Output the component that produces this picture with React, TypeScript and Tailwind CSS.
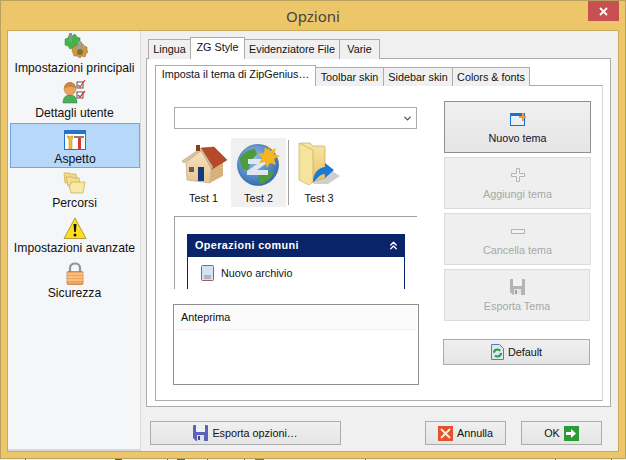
import React from 'react';
import { ChevronDown, ChevronsUp } from 'lucide-react';

const GearsIcon = () => (
  <svg width="30" height="27" viewBox="0 0 30 27">
    <path d="M5 6l3-1 1-3 3 1 3-2 2 3 3 1v3l2 2-2 3-3 1-1 2-3-1-3 1-2-3-3-1V9z" fill="#45b24a" stroke="#2c8a35" strokeWidth=".5" />
    <path d="M13 14l3-1 1-2 3 1 3-1 1 2 3 1v3l1 2-2 2-1 3-3-1-2 2-3-2-3 0-1-3-1-2z" fill="#c99a45" stroke="#8c6a28" strokeWidth=".5" />
    <circle cx="20" cy="19" r="3" fill="#8e6a2c" />
    <rect x="9" y="0" width="3" height="9" fill="#8a9296" />
    <rect x="18" y="8" width="3" height="8" fill="#9aa2a6" />
  </svg>
);

const UserCheckIcon = () => (
  <svg width="26" height="26" viewBox="0 0 26 26">
    <path d="M1 24c0-6 3-8 7-8s7 2 7 8z" fill="#4cae5b" stroke="#2c7d3b" strokeWidth=".5" />
    <circle cx="8" cy="10" r="6" fill="#e9a35f" stroke="#b87433" strokeWidth=".5" />
    <path d="M2 10c0-5 3-7 6-7s6 2 6 7c-3-3-9-3-12 0z" fill="#c98343" />
    <rect x="15" y="3" width="6" height="6" fill="#fff" stroke="#555" />
    <rect x="15" y="13" width="6" height="6" fill="#fff" stroke="#555" />
    <path d="M16 6l2 2 5-7M16 16l2 2 5-6" fill="none" stroke="#d8382c" strokeWidth="1.2" />
  </svg>
);

const AppearanceIcon = () => (
  <svg width="22" height="21" viewBox="0 0 22 21">
    <rect x=".5" y=".5" width="21" height="19" fill="#fff" stroke="#2a6fc9" />
    <rect x="1" y="1" width="20" height="3" fill="#2a6fc9" />
    <path d="M3 6l2 0 1 2 1-2 2 0-1 4v9H5v-9z" fill="#f0c030" stroke="#a67c10" strokeWidth=".5" />
    <path d="M10 6h10v2h-10z" fill="#7d8488" />
    <rect x="14" y="8" width="3" height="11" fill="#d9392b" />
  </svg>
);

const FoldersIcon = () => (
  <svg width="24" height="24" viewBox="0 0 24 24">
    <path d="M1 2h6l1 1h5l1 9H2z" fill="#f0da8c" stroke="#c9a94a" strokeWidth=".7" />
    <path d="M3 6h6l1 1h6l1 8H5z" fill="#f3de92" stroke="#c9a94a" strokeWidth=".7" />
    <path d="M8 11h14l-2 11H8l-2-8 2-1z" fill="#f8e9a4" stroke="#c9a94a" strokeWidth=".7" />
  </svg>
);

const WarningIcon = () => (
  <svg width="24" height="23" viewBox="0 0 24 23">
    <path d="M12 1L23 21.500H1z" fill="#ffdc1e" stroke="#9c8a30" strokeWidth=".8" strokeLinejoin="round" />
    <path d="M10.500 7h3l-.7 8h-1.600z" fill="#111" />
    <circle cx="12" cy="18" r="1.500" fill="#111" />
  </svg>
);

const LockIcon = () => (
  <svg width="18" height="23" viewBox="0 0 18 23">
    <path d="M4 10V6c0-6 10-6 10 0v4" fill="none" stroke="#8b97a3" strokeWidth="2.200" />
    <rect x="1" y="9.500" width="16" height="13" rx="1" fill="#f0a45c" stroke="#bd7430" strokeWidth=".7" />
    <path d="M1 12h16M1 15h16M1 18h16" stroke="#fbd9a4" strokeWidth="1" />
  </svg>
);

const HouseIcon = () => (
  <svg width="46" height="42" viewBox="0 0 46 42">
    <defs>
      <linearGradient id="houseFront" x1="0" y1="0" x2="0" y2="1">
        <stop offset="0" stopColor="#f8e3c0" />
        <stop offset="1" stopColor="#e6c595" />
      </linearGradient>
    </defs>
    <path d="M30 24l12-6v14l-13 7z" fill="#dcb781" />
    <path d="M30 27l12-6M30 30l12-6M30 33l12-6M30 36l12-6" stroke="#c49c62" strokeWidth=".6" />
    <path d="M20 5L5 19l1 17 23 3 1-15z" fill="url(#houseFront)" stroke="#b09468" strokeWidth=".5" />
    <path d="M20 4l13-1 13 13-15 9z" fill="#b5492a" stroke="#84331a" strokeWidth=".5" />
    <path d="M20 4L1 17l2 2L20 7l11 18 1-2z" fill="#d9c3a0" stroke="#9a8660" strokeWidth=".4" />
    <rect x="15" y="1" width="4" height="6" fill="#8e3a1c" />
    <rect x="8" y="23" width="5" height="5" fill="#5b6160" />
    <rect x="17" y="23" width="6" height="14" fill="#123a78" />
  </svg>
);

const GlobeIcon = () => (
  <svg width="44" height="42" viewBox="0 0 44 42">
    <defs>
      <radialGradient id="globeSea" cx=".4" cy=".35" r=".75">
        <stop offset="0" stopColor="#8fc0ea" />
        <stop offset="1" stopColor="#2a62a8" />
      </radialGradient>
    </defs>
    <circle cx="21" cy="21" r="20.500" fill="url(#globeSea)" stroke="#2b5e96" strokeWidth=".6" />
    <path d="M3 14c4-6 10-9 15-9l2 5-6 7-3 9-5-1c-2-3-3-7-3-11z" fill="#4f9a3b" />
    <path d="M21 31l9-4 7 1c-3 7-8 11-14 12z" fill="#4f9a3b" />
    <path d="M11 15h19v4L20 26h11v5H10v-4l10-7H11z" fill="#dfe7f2" />
    <path d="M31 1l2 6 6-3-2 6 6 2-6 3 2 6-6-2-3 5-2-6-6 1 3-5-4-4 6-1 1-6 3 3z" fill="#f6b51f" />
  </svg>
);

const FolderShortcutIcon = () => (
  <svg width="44" height="44" viewBox="0 0 44 44">
    <defs>
      <linearGradient id="folderBack" x1="0" y1="0" x2="0" y2="1">
        <stop offset="0" stopColor="#f7e6a6" />
        <stop offset="1" stopColor="#e8c268" />
      </linearGradient>
    </defs>
    <path d="M27 24l16 10-12 8H16z" fill="#a8a8a8" opacity=".55" />
    <path d="M4 1h9l3 3h11c1 0 1 1 1 2v30l-14 4z" fill="url(#folderBack)" stroke="#bc9a42" strokeWidth=".6" />
    <path d="M2 1l14 7v32l-4 3L2 38z" fill="#f6e39c" stroke="#c4a24a" strokeWidth=".6" />
    <path d="M16 41c0-9 4-15 12-16v-4l9 7-9 8v-4c-4 0-7 3-12 9z" fill="#1c79d4" />
  </svg>
);

const FloppyIcon = ({ disabled }: { disabled?: boolean }) => (
  <svg width="15" height="16" viewBox="0 0 15 16">
    <path d="M0 1a1 1 0 011-1h13a1 1 0 011 1v15H3l-3-3z" fill={disabled ? '#b4b4b4' : '#5a63b8'} />
    <rect x="3" y="0" width="9" height="7" fill={disabled ? '#f2f2f2' : '#eef0f8'} />
    <rect x="4" y="10" width="7" height="6" fill={disabled ? '#e6e6e6' : '#dfe2ee'} />
    <rect x="5" y="11" width="2" height="4" fill={disabled ? '#a0a0a0' : '#3d4696'} />
  </svg>
);

const sidebarItems = [
  { label: 'Impostazioni principali', icon: <GearsIcon /> },
  { label: 'Dettagli utente', icon: <UserCheckIcon /> },
  { label: 'Aspetto', icon: <AppearanceIcon />, active: true },
  { label: 'Percorsi', icon: <FoldersIcon /> },
  { label: 'Impostazioni avanzate', icon: <WarningIcon /> },
  { label: 'Sicurezza', icon: <LockIcon /> },
];

const Tab = ({ label, active, className }: { label: string; active?: boolean; className: string }) => (
  <div
    className={`flex items-center justify-center border border-b-0 border-[#acacac] whitespace-nowrap ${
      active ? 'bg-white relative z-10 pb-[3px]' : 'bg-[#f0f0f0]'
    } ${className}`}
  >
    {label}
  </div>
);

const ThemeButton = ({
  label,
  icon,
  disabled,
  className,
}: {
  label: string;
  icon: React.ReactNode;
  disabled?: boolean;
  className: string;
}) => (
  <div
    className={`flex flex-col items-center h-[52px] pt-[9px] border ${
      disabled
        ? 'border-[#dcdcdc] bg-[#efefef] text-[#a8a8a8]'
        : 'border-[#8f8f8f] bg-gradient-to-b from-[#f0f0f0] to-[#e5e5e5] text-[#101030]'
    } ${className}`}
  >
    <div className="h-[16px] flex items-center">{icon}</div>
    <span className="mt-[3px] leading-[16px]">{label}</span>
  </div>
);

const FooterButton = ({ children, className }: { children: React.ReactNode; className: string }) => (
  <div
    className={`h-[24px] flex items-center justify-center gap-[4px] border border-[#acacac] bg-gradient-to-b from-[#f0f0f0] to-[#e5e5e5] ${className}`}
  >
    {children}
  </div>
);

export default function App() {
  return (
    <div className="w-[626px] h-[460px] overflow-hidden bg-[#f3f3f3] flex flex-col text-[10.8px] text-[#111] font-['Liberation_Sans',sans-serif]">
      <div className="h-[459px] shrink-0 border border-[#b9a15f] bg-[#edc66a] flex flex-col">
        <div className="h-[29px] shrink-0 relative flex items-center justify-center text-[15px] text-[#444] pt-[1px] font-['Noto_Sans',sans-serif]">
          Opzioni
          <div className="absolute right-[6px] top-0 w-[31px] h-[20px] bg-[#c75050] flex items-center justify-center text-white">
            <svg width="9" height="9" viewBox="0 0 9 9">
              <path d="M1 1l7 7M8 1l-7 7" stroke="#fff" strokeWidth="1.800" />
            </svg>
          </div>
        </div>

        <div className="flex-1 mx-[6px] mb-[6px] border border-[#c9a95c] bg-[#f0f0f0] flex min-h-0">
          {/* left list */}
          <div className="w-[133px] shrink-0 bg-[#f5f6f7] border-r border-b-2 border-[#d9d9d9] pt-[2px] pl-[1px] flex flex-col text-[12.2px]">
            {sidebarItems.map((item) => (
              <div
                key={item.label}
                className={`h-[45px] shrink-0 flex flex-col items-center whitespace-nowrap ${
                  item.active ? 'ml-[1px] border border-[#6fa8e0] bg-[#b7d8f9]' : ''
                }`}
              >
                <div className="h-[27px] flex items-end justify-center">{item.icon}</div>
                <span className="leading-[16px]">{item.label}</span>
              </div>
            ))}
          </div>

          <div className="flex-1 min-w-0 flex flex-col pl-[5px]">
            <div className="h-[27px] shrink-0 flex items-end pl-[2px] relative top-[1px]">
              <Tab label="Lingua" className="w-[42px] h-[20px] border-r-0" />
              <Tab label="ZG Style" active className="w-[55px] h-[22px]" />
              <Tab label="Evidenziatore File" className="w-[95px] h-[20px] border-l-0" />
              <Tab label="Varie" className="w-[40px] h-[20px] border-l-0" />
            </div>

            <div className="w-[465px] h-[349px] shrink-0 border border-[#acacac] bg-white pl-[8px] pt-[5px]">
              <div className="flex h-[21px] items-end relative top-[1px]">
                <Tab label="Imposta il tema di ZipGenius…" active className="w-[161px] h-[21px]" />
                <Tab label="Toolbar skin" className="w-[68px] h-[19px] border-l-0" />
                <Tab label="Sidebar skin" className="w-[69px] h-[19px] border-l-0" />
                <Tab label="Colors & fonts" className="w-[77px] h-[19px] border-l-0" />
              </div>

              <div className="w-[448px] h-[316px] border border-[#acacac] border-r-[#d8d8d8] bg-white flex pl-[17px] pt-[15px]">
                <div className="w-[246px] shrink-0 flex flex-col">
                  <div className="h-[22px] w-[243px] ml-[1px] mt-[6px] border border-[#ababab] flex items-center justify-end pr-[3px]">
                    <ChevronDown size={11} strokeWidth={3} className="text-[#555]" />
                  </div>

                  <div className="flex mt-[9px] h-[69px] ml-[1px]">
                    <div className="w-[57px] flex flex-col items-center pt-[6px] pl-[2px]">
                      <HouseIcon />
                      <span className="leading-[16px] mt-[4px]">Test 1</span>
                    </div>
                    <div className="w-[55px] bg-[#f0f0f0] flex flex-col items-center pt-[6px]">
                      <GlobeIcon />
                      <span className="leading-[16px] mt-[4px]">Test 2</span>
                    </div>
                    <div className="w-px h-[65px] mt-[2px] ml-[2px] bg-[#a0a0a0]" />
                    <div className="w-[60px] flex flex-col items-center pt-[4px]">
                      <FolderShortcutIcon />
                      <span className="leading-[16px] mt-[4px]">Test 3</span>
                    </div>
                  </div>

                  <div className="mt-[9px] h-[73px] w-[243px] ml-[1px] border-t border-l border-[#a0a0a0] pl-[12px] pt-[17px]">
                    <div className="w-[218px] h-[55px] border-x border-[#0a246a]">
                      <div className="h-[23px] bg-[#0a246a] text-white font-bold flex items-center justify-between pl-[8px] pr-[5px] -mx-px tracking-[.4px]">
                        Operazioni comuni
                        <ChevronsUp size={13} strokeWidth={2.500} />
                      </div>
                      <div className="flex items-center pl-[13px] pt-[8px] gap-[7px]">
                        <svg width="13" height="16" viewBox="0 0 13 16">
                          <rect x=".5" y=".5" width="12" height="15" rx="1" fill="#d6e2ef" stroke="#a0604c" />
                          <path d="M3 11h7M3 13h7" stroke="#6f8fb2" />
                        </svg>
                        <span className="leading-[16px]">Nuovo archivio</span>
                      </div>
                    </div>
                  </div>

                  <div className="mt-[15px] h-[81px] w-[246px] border border-[#8e8e96] p-[1px]">
                    <div className="h-[24px] bg-[#fbfbfb] border-b border-[#eef0f5] flex items-center pl-[6px]">Anteprima</div>
                  </div>
                </div>

                <div className="ml-[25px] w-[147px] flex flex-col text-center">
                  <ThemeButton
                    label="Nuovo tema"
                    className=""
                    icon={
                      <svg width="16" height="13" viewBox="0 0 16 13">
                        <rect x=".5" y=".5" width="14" height="12" fill="#e8f0fa" stroke="#1c6fd0" />
                        <rect x="1" y="1" width="13" height="2" fill="#1c6fd0" />
                        <path d="M9 3h3V0h2v3h2v2h-2v3h-2V5H9z" fill="#f29a2e" />
                      </svg>
                    }
                  />
                  <ThemeButton
                    label="Aggiungi tema"
                    disabled
                    className="mt-[4px]"
                    icon={
                      <svg width="14" height="14" viewBox="0 0 14 14">
                        <path d="M5.500.5h3v5h5v3h-5v5h-3v-5h-5v-3h5z" fill="#f2f2f2" stroke="#b4b4b4" />
                      </svg>
                    }
                  />
                  <ThemeButton
                    label="Cancella tema"
                    disabled
                    className="mt-[4px]"
                    icon={
                      <svg width="14" height="5" viewBox="0 0 14 5">
                        <rect x=".5" y=".5" width="13" height="4" fill="#f2f2f2" stroke="#b4b4b4" />
                      </svg>
                    }
                  />
                  <ThemeButton
                    label="Esporta Tema"
                    disabled
                    className="mt-[4px] w-[146px]"
                    icon={<FloppyIcon disabled />}
                  />
                  <div className="mt-[18px] -ml-px w-[147px] h-[26px] flex items-center justify-center gap-[4px] border border-[#acacac] bg-gradient-to-b from-[#f0f0f0] to-[#e5e5e5]">
                    <svg width="13" height="16" viewBox="0 0 13 16">
                      <path d="M.5.500h8l4 4v11H.5z" fill="#dbe8f7" stroke="#4f7fc0" />
                      <circle cx="6.500" cy="9" r="3.500" fill="none" stroke="#2f9e3a" strokeWidth="2.200" strokeDasharray="8 3" />
                    </svg>
                    Default
                  </div>
                </div>
              </div>
            </div>

            <div className="flex mt-[14px] pl-[4px]">
              <FooterButton className="w-[191px]">
                <FloppyIcon />
                Esporta opzioni…
              </FooterButton>
              <FooterButton className="w-[81px] ml-[84px]">
                <svg width="15" height="15" viewBox="0 0 15 15">
                  <rect width="15" height="15" fill="#e0532f" />
                  <path d="M3 3l9 9M12 3l-9 9" stroke="#fbe9df" strokeWidth="2" />
                </svg>
                Annulla
              </FooterButton>
              <FooterButton className="w-[81px] ml-[15px]">
                OK
                <svg width="15" height="15" viewBox="0 0 15 15">
                  <rect width="15" height="15" fill="#2c9a35" />
                  <path d="M2 6h5V3l5 4.500-5 4.500V9H2z" fill="#fff" />
                </svg>
              </FooterButton>
            </div>
          </div>
        </div>
      </div>
      {/* sliver of the desktop behind the window */}
      <svg width="626" height="1" className="shrink-0 block">
        <path d="M25 0h1v1h-1zM167 0h1v1h-1zM207 0h1v1h-1zM244 0h1v1h-1zM365 0h1v1h-1zM555 0h1v1h-1zM611 0h1v1h-1z" fill="#555" />
        <path d="M115 0h7v1h-7z" fill="#7a5a20" />
        <path d="M177 0h8v1h-8z" fill="#3f6f8f" />
        <path d="M255 0h9v1h-9z" fill="#7c7460" />
      </svg>
    </div>
  );
}
